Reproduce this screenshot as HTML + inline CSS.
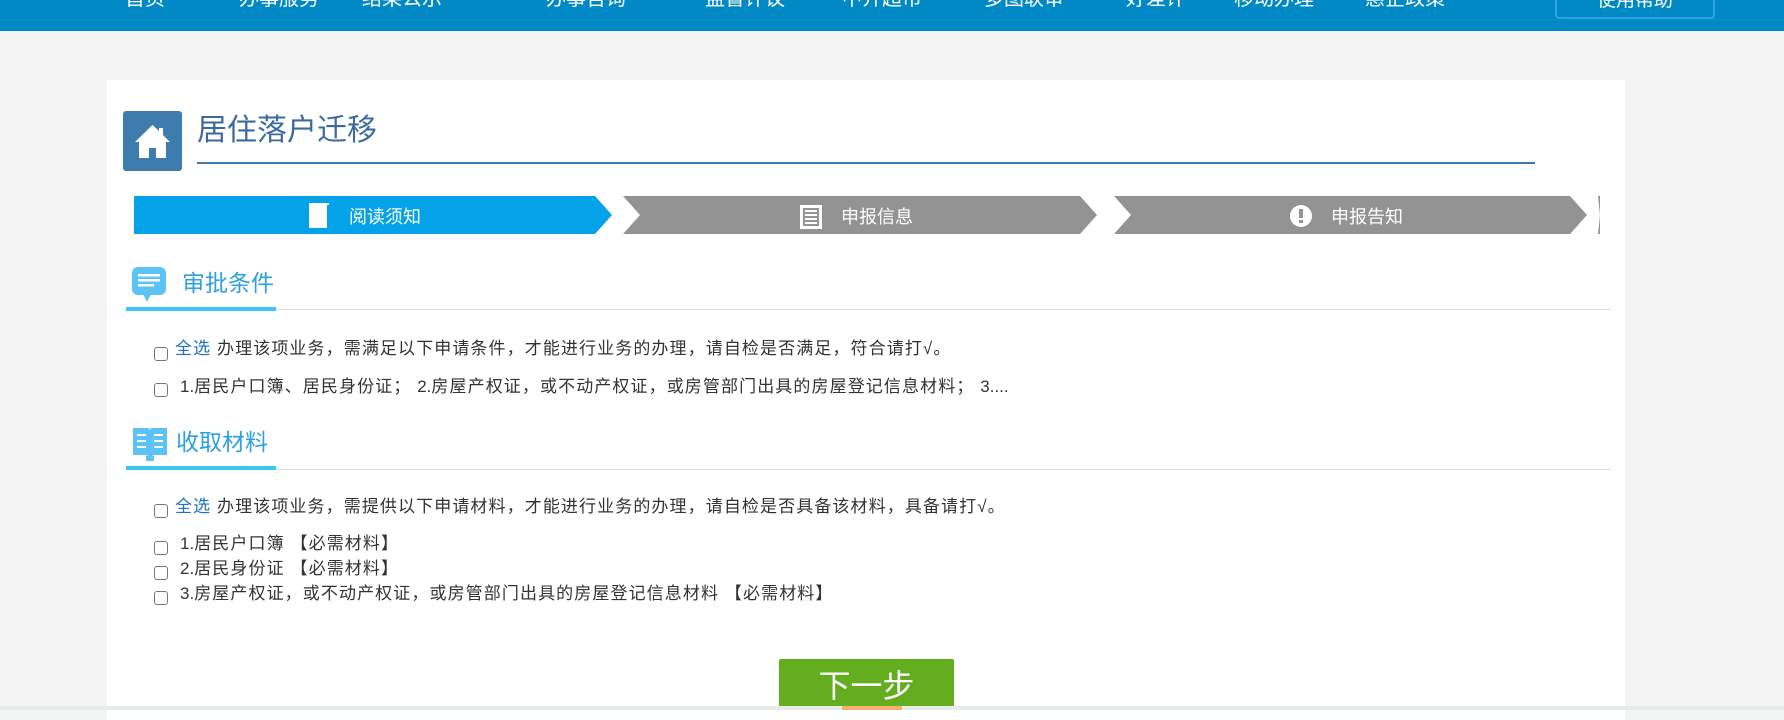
<!DOCTYPE html>
<html><head><meta charset="utf-8"><style>
*{margin:0;padding:0;box-sizing:border-box}
body{width:1784px;height:710px;overflow:hidden;background:#f4f4f4;font-family:"Liberation Sans","Noto Sans CJK SC",sans-serif;position:relative}
.hdr{position:absolute;left:0;top:0;width:1784px;height:31px;background:#0089c4}
.nav{position:absolute;top:-14px;color:#fff;font-size:20px;line-height:26px;white-space:nowrap}
.help{position:absolute;left:1555px;top:-10px;width:160px;height:29px;border:2px solid #2aa5e0;border-top:none;border-radius:0 0 4px 4px;color:#fff;font-size:19px;text-align:center;line-height:22px;padding-top:0}
.card{position:absolute;left:107px;top:80px;width:1518px;height:640px;background:#fff}
.a{position:absolute;white-space:nowrap}
.home{left:123px;top:111px;width:59px;height:60px;background:#3f7cae;border-radius:3px}
.title{left:197px;top:113px;font-size:30px;color:#3d6a9e;line-height:36px}
.tline{left:197px;top:162px;width:1338px;height:2px;background:#3d7aaa}
.st{position:absolute;top:196px;height:38px;line-height:42px;color:#fff;font-size:18px}
.sec{font-size:23px;color:#2e9fe0;line-height:30px}
.bl{height:4px;background:#3ec6f3}
.gl{height:1px;background:#ddd}
.txt{font-size:17px;color:#333;line-height:20px;letter-spacing:1.1px}
.n{letter-spacing:0}
.cb{position:absolute;width:14px;height:14px;border:1px solid #777;border-radius:3px;background:#fff}
.blue{color:#1f6fc4}
.btn{left:779px;top:659px;width:175px;height:47px;background:#63ad1e;border-radius:2px 2px 0 0;color:#fff;font-size:32px;text-align:center;line-height:54px;overflow:hidden}
</style></head><body>
<div class="hdr"></div>
<div class="nav" style="left:125px">首页</div>
<div class="nav" style="left:239px">办事服务</div>
<div class="nav" style="left:362px">结果公示</div>
<div class="nav" style="left:546px">办事咨询</div>
<div class="nav" style="left:705px">监督评议</div>
<div class="nav" style="left:842px">中介超市</div>
<div class="nav" style="left:984px">多图联审</div>
<div class="nav" style="left:1126px">好差评</div>
<div class="nav" style="left:1234px">移动办理</div>
<div class="nav" style="left:1365px">惠企政策</div>
<div class="help">使用帮助</div>

<div class="card"></div>
<div class="a home"><svg width="59" height="60" viewBox="0 0 59 60"><path d="M29.5 14 L12 31 L16 31 L16 47 L26 47 L26 37 L33 37 L33 47 L43 47 L43 31 L47 31 L40 24 L40 17 L36 17 L36 20 Z" fill="#fff"/></svg></div>
<div class="a title">居住落户迁移</div>
<div class="a tline"></div>

<svg class="a" style="left:0;top:0" width="1784" height="240">
<polygon points="134,196 595,196 612,215 595,234 134,234" fill="#04a2e8"/>
<polygon points="623,196 1080,196 1097,215 1080,234 623,234 640,215" fill="#939393"/>
<polygon points="1114,196 1570,196 1587,215 1570,234 1114,234 1131,215" fill="#939393"/>
<polygon points="1598,196 1600,196 1600,234 1598,234 1600,215" fill="#939393"/>
<rect x="309" y="203" width="20" height="25" fill="#fff"/><rect x="327" y="205" width="2" height="23" fill="#04a2e8"/>
<rect x="800" y="205" width="22" height="24" fill="#fff"/><rect x="803" y="208" width="16" height="18" fill="#939393"/>
<g fill="#fff"><rect x="805" y="210" width="12" height="2"/><rect x="805" y="214" width="12" height="2"/><rect x="805" y="218" width="12" height="2"/><rect x="805" y="222" width="12" height="2"/></g>
<circle cx="1301" cy="216" r="11" fill="#fff"/><rect x="1299" y="209" width="4" height="9" fill="#939393"/><rect x="1299" y="220" width="4" height="3" fill="#939393"/>
</svg>
<div class="st" style="left:349px">阅读须知</div>
<div class="st" style="left:841px">申报信息</div>
<div class="st" style="left:1331px">申报告知</div>

<svg class="a" style="left:131px;top:266px" width="36" height="38"><rect x="1" y="1" width="34" height="28" rx="6" fill="#5cc3f5"/><polygon points="12,28 20,28 16,36" fill="#5cc3f5"/><g fill="#fff"><rect x="7" y="8" width="22" height="2.5"/><rect x="7" y="13" width="22" height="2.5"/><rect x="7" y="18" width="16" height="2.5"/></g></svg>
<div class="a sec" style="left:182px;top:268px">审批条件</div>
<div class="a gl" style="left:126px;top:309px;width:1485px"></div>
<div class="a bl" style="left:126px;top:307px;width:150px"></div>

<div class="cb" style="left:154px;top:347px"></div>
<div class="a txt" style="left:175px;top:339px"><span class="blue">全选</span> 办理该项业务，需满足以下申请条件，才能进行业务的办理，请自检是否满足，符合请打√。</div>
<div class="cb" style="left:154px;top:383px"></div>
<div class="a txt" style="left:180px;top:377px"><span class="n">1.</span>居民户口簿、居民身份证； <span class="n">2.</span>房屋产权证，或不动产权证，或房管部门出具的房屋登记信息材料； <span class="n">3....</span></div>

<svg class="a" style="left:131px;top:424px" width="38" height="40"><path d="M2 4 L17 4 Q19 4 19 7 L19 34 Q17 31 14 31 L2 31 Z M36 4 L21 4 Q19 4 19 7 L19 34 Q21 31 24 31 L36 31 Z" fill="#5cc3f5"/><g fill="#fff"><rect x="6" y="10" width="9" height="2"/><rect x="6" y="16" width="9" height="2"/><rect x="6" y="22" width="9" height="2"/><rect x="23" y="10" width="9" height="2"/><rect x="23" y="16" width="9" height="2"/><rect x="23" y="22" width="9" height="2"/></g><rect x="15" y="32" width="8" height="5" fill="#5cc3f5"/></svg>
<div class="a sec" style="left:176px;top:427px">收取材料</div>
<div class="a gl" style="left:126px;top:469px;width:1485px"></div>
<div class="a bl" style="left:126px;top:466px;width:150px"></div>

<div class="cb" style="left:154px;top:504px"></div>
<div class="a txt" style="left:175px;top:497px"><span class="blue">全选</span> 办理该项业务，需提供以下申请材料，才能进行业务的办理，请自检是否具备该材料，具备请打√。</div>
<div class="cb" style="left:154px;top:541px"></div>
<div class="a txt" style="left:180px;top:534px"><span class="n">1.</span>居民户口簿 【必需材料】</div>
<div class="cb" style="left:154px;top:566px"></div>
<div class="a txt" style="left:180px;top:559px"><span class="n">2.</span>居民身份证 【必需材料】</div>
<div class="cb" style="left:154px;top:591px"></div>
<div class="a txt" style="left:180px;top:584px"><span class="n">3.</span>房屋产权证，或不动产权证，或房管部门出具的房屋登记信息材料 【必需材料】</div>

<div class="a btn">下一步</div>
<div class="a" style="left:0;top:706px;width:1784px;height:4px;background:#e6ece8"></div>
<div class="a" style="left:842px;top:706px;width:60px;height:4px;background:#f4b070"></div>
</body></html>
